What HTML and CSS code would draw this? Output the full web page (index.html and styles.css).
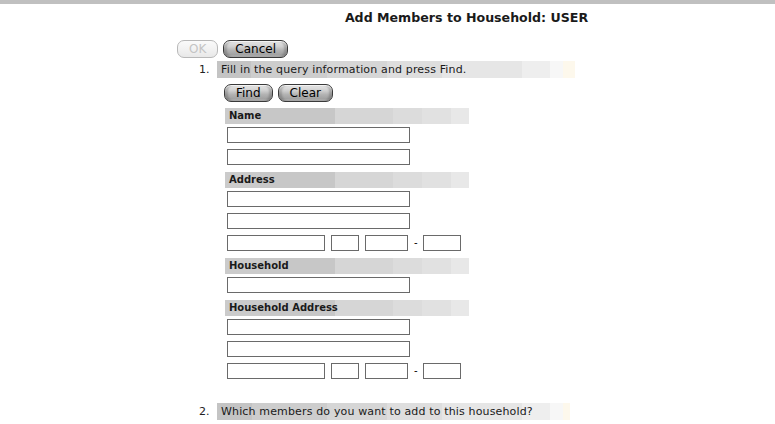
FILE: index.html
```html
<!DOCTYPE html>
<html>
<head>
<meta charset="utf-8">
<title>Add Members to Household</title>
<link rel="stylesheet" href="styles.css">
</head>
<body>
<div class="topbar"></div>
<main class="page">
  <h1 class="title">Add Members to Household: USER</h1>
  <div class="actions">
    <button class="btn" disabled>OK</button>
    <button class="btn">Cancel</button>
  </div>
  <ol class="steps">
    <li class="step">
      <span class="num">1.</span>
      <div class="step-body">
        <div class="band band-1">Fill in the query information and press Find.</div>
        <div class="actions find-row">
          <button class="btn">Find</button>
          <button class="btn">Clear</button>
        </div>
        <section class="group">
          <div class="ghead">Name</div>
          <div class="row"><input class="in-long" type="text"></div>
          <div class="row"><input class="in-long" type="text"></div>
        </section>
        <section class="group">
          <div class="ghead">Address</div>
          <div class="row"><input class="in-long" type="text"></div>
          <div class="row"><input class="in-long" type="text"></div>
          <div class="row">
            <input class="in-city" type="text">
            <input class="in-state" type="text">
            <input class="in-zip" type="text">
            <span class="dash">-</span>
            <input class="in-zip4" type="text">
          </div>
        </section>
        <section class="group">
          <div class="ghead">Household</div>
          <div class="row"><input class="in-long" type="text"></div>
        </section>
        <section class="group">
          <div class="ghead">Household Address</div>
          <div class="row"><input class="in-long" type="text"></div>
          <div class="row"><input class="in-long" type="text"></div>
          <div class="row">
            <input class="in-city" type="text">
            <input class="in-state" type="text">
            <input class="in-zip" type="text">
            <span class="dash">-</span>
            <input class="in-zip4" type="text">
          </div>
        </section>
      </div>
    </li>
    <li class="step step-2">
      <span class="num">2.</span>
      <div class="step-body">
        <div class="band band-2">Which members do you want to add to this household?</div>
      </div>
    </li>
  </ol>
</main>
</body>
</html>
```

FILE: styles.css
```css
html, body {
  margin: 0;
  padding: 0;
  background: #ffffff;
}

body {
  font-family: "DejaVu Sans", Verdana, sans-serif;
  font-size: 10px;
  color: #000000;
}

.topbar {
  height: 4px;
  background: #c0c0c0;
}

.page {
  margin-left: 177px;
  width: 579px;
}

.title {
  margin: 6px 0 0 0;
  font-size: 12.6px;
  line-height: 15px;
  font-weight: bold;
  text-align: center;
  color: #1a1a1a;
}

.actions {
  display: flex;
  gap: 5px;
  margin-top: 15px;
}

.btn {
  box-sizing: border-box;
  height: 18px;
  margin: 0;
  padding: 0 11px;
  font-family: "DejaVu Sans", Verdana, sans-serif;
  font-size: 12px;
  line-height: 16px;
  color: #000000;
  border: 1px solid #3a3a3a;
  border-radius: 7px;
  background: linear-gradient(to bottom, #e8e8e8 0%, #d0d0d0 35%, #b2b2b2 60%, #a2a2a2 85%, #bdbdbd 100%);
  box-shadow: inset 0 1px 0 rgba(255,255,255,0.75), inset 3px 0 2px rgba(0,0,0,0.18), inset -3px 0 2px rgba(0,0,0,0.18);
}

.btn:disabled {
  color: #c4c4c4;
  border-color: #b8b8b8;
  background: linear-gradient(to bottom, #fafafa 0%, #f2f2f2 50%, #e8e8e8 100%);
  box-shadow: none;
}

.steps {
  list-style: none;
  margin: 3px 0 0 0;
  padding: 0;
}

.step {
  display: flex;
}

.num {
  box-sizing: border-box;
  width: 40px;
  padding-left: 22px;
  font-size: 11px;
  line-height: 17px;
  color: #222222;
}

.step-body {
  display: flex;
  flex-direction: column;
}

.band {
  height: 17px;
  line-height: 17px;
  padding-left: 4px;
  box-sizing: border-box;
  font-size: 11px;
  letter-spacing: 0.15px;
  color: #1a1a1a;
  white-space: nowrap;
}

.band-1 {
  width: 358px;
  background: linear-gradient(to right,
    #c4c4c4 0, #c4c4c4 34px,
    #cdcdcd 34px, #cdcdcd 110px,
    #d6d6d6 110px, #d6d6d6 170px,
    #dedede 170px, #dedede 225px,
    #e6e6e6 225px, #e6e6e6 305px,
    #eeeeee 305px, #eeeeee 333px,
    #f7f7f7 333px, #f7f7f7 346px,
    #fdf8ec 346px, #fdf8ec 100%);
}

.band-2 {
  width: 353px;
  background: linear-gradient(to right,
    #c4c4c4 0, #c4c4c4 35px,
    #cdcdcd 35px, #cdcdcd 110px,
    #d6d6d6 110px, #d6d6d6 170px,
    #dedede 170px, #dedede 225px,
    #e6e6e6 225px, #e6e6e6 305px,
    #eeeeee 305px, #eeeeee 333px,
    #f7f7f7 333px, #f7f7f7 346px,
    #fdf8ec 346px, #fdf8ec 100%);
}

.find-row {
  margin-top: 6px;
  margin-left: 7px;
}

.group {
  margin-left: 8px;
  margin-top: 6px;
}

.group + .group {
  margin-top: 7px;
}

.ghead {
  width: 244px;
  height: 16px;
  line-height: 16px;
  padding-left: 4px;
  box-sizing: border-box;
  font-weight: bold;
  font-size: 10px;
  color: #1a1a1a;
  margin-bottom: 3px;
  background: linear-gradient(to right,
    #cbcbcb 0, #cbcbcb 35px,
    #c7c7c7 35px, #c7c7c7 110px,
    #d6d6d6 110px, #d6d6d6 168px,
    #dcdcdc 168px, #dcdcdc 197px,
    #e1e1e1 197px, #e1e1e1 226px,
    #e8e8e8 226px, #e8e8e8 100%);
}

.row {
  display: flex;
  align-items: center;
  gap: 6px;
  margin-left: 2px;
}

.row + .row {
  margin-top: 6px;
}

.row input {
  box-sizing: border-box;
  height: 16px;
  margin: 0;
  padding: 0 2px;
  border: 1px solid #6a6a6a;
  background: #ffffff;
  font-family: "DejaVu Sans", Verdana, sans-serif;
  font-size: 10px;
}

.in-long { width: 183px; }
.in-city { width: 98px; }
.in-state { width: 28px; }
.in-zip { width: 43px; }
.in-zip4 { width: 38px; }

.dash {
  width: 3px;
  text-align: center;
  line-height: 16px;
}

.step-2 {
  margin-top: 24px;
}
```
